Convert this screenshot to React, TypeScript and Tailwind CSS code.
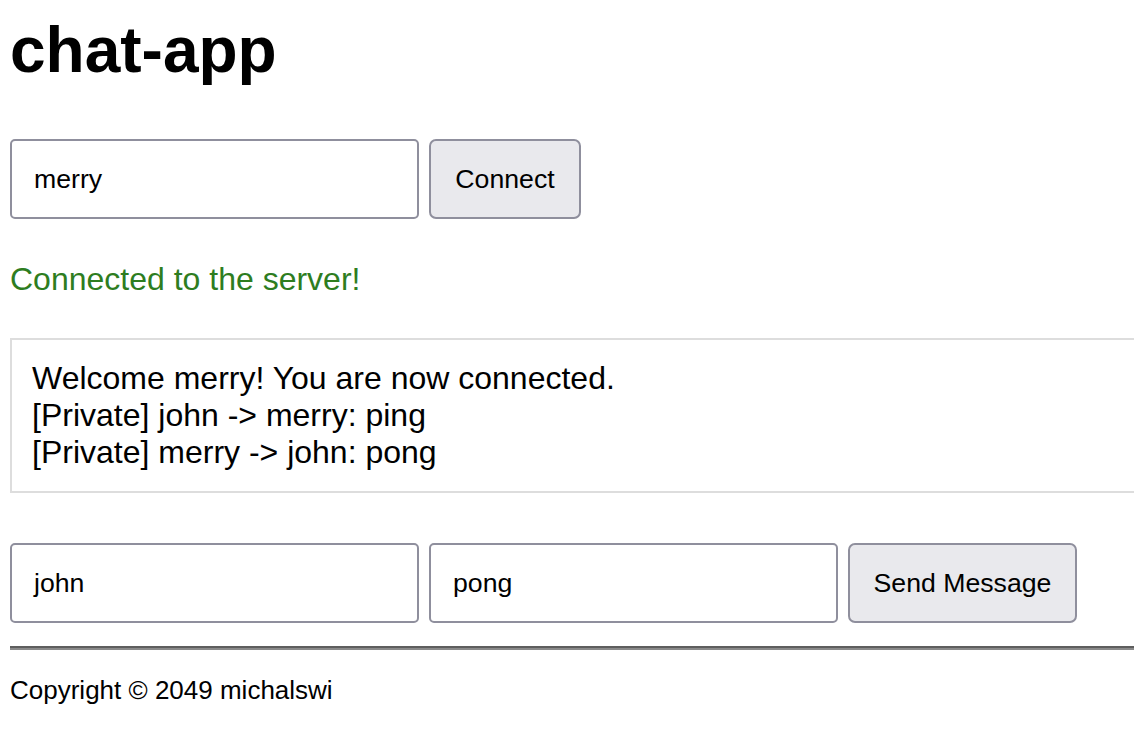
import React from "react";

export default function App() {
  return (
    <div className="w-[1134px] h-[752px] overflow-hidden bg-white text-black px-[10px] font-['Liberation_Sans',Arial,sans-serif]">
      <h1 className="mt-[13px] text-[64px] leading-[74px] font-bold">chat-app</h1>

      <div className="mt-[52px] flex gap-[10px]">
        <div className="w-[409px] h-[80px] border-2 border-[#8f8f9d] rounded-[5px] px-[22px] flex items-center text-[26.67px] bg-white">
          merry
        </div>
        <div className="w-[152px] h-[80px] border-2 border-[#8f8f9d] rounded-[7px] bg-[#e9e9ed] flex items-center justify-center text-[26.67px]">
          Connect
        </div>
      </div>

      <p className="mt-[42px] text-[32px] leading-[37px] text-[#2e7d1f]">Connected to the server!</p>

      <div className="mt-[40px] w-[1200px] border-2 border-[#dddddd] p-[20px] text-[32px] leading-[37px]">
        <div>Welcome merry! You are now connected.</div>
        <div>[Private] john -&gt; merry: ping</div>
        <div>[Private] merry -&gt; john: pong</div>
      </div>

      <div className="mt-[50px] flex gap-[10px]">
        <div className="w-[409px] h-[80px] border-2 border-[#8f8f9d] rounded-[5px] px-[22px] flex items-center text-[26.67px] bg-white">
          john
        </div>
        <div className="w-[409px] h-[80px] border-2 border-[#8f8f9d] rounded-[5px] px-[22px] flex items-center text-[26.67px] bg-white">
          pong
        </div>
        <div className="w-[229px] h-[80px] border-2 border-[#8f8f9d] rounded-[7px] bg-[#e9e9ed] flex items-center justify-center text-[26.67px]">
          Send Message
        </div>
      </div>

      <div className="mt-[23px] w-[1200px] h-[4px] border-t-2 border-b-2 border-t-[#5e5e5e] border-b-[#8a8a8a]" />

      <p className="mt-[25px] text-[26px] leading-[30px]">Copyright © 2049 michalswi</p>
    </div>
  );
}
